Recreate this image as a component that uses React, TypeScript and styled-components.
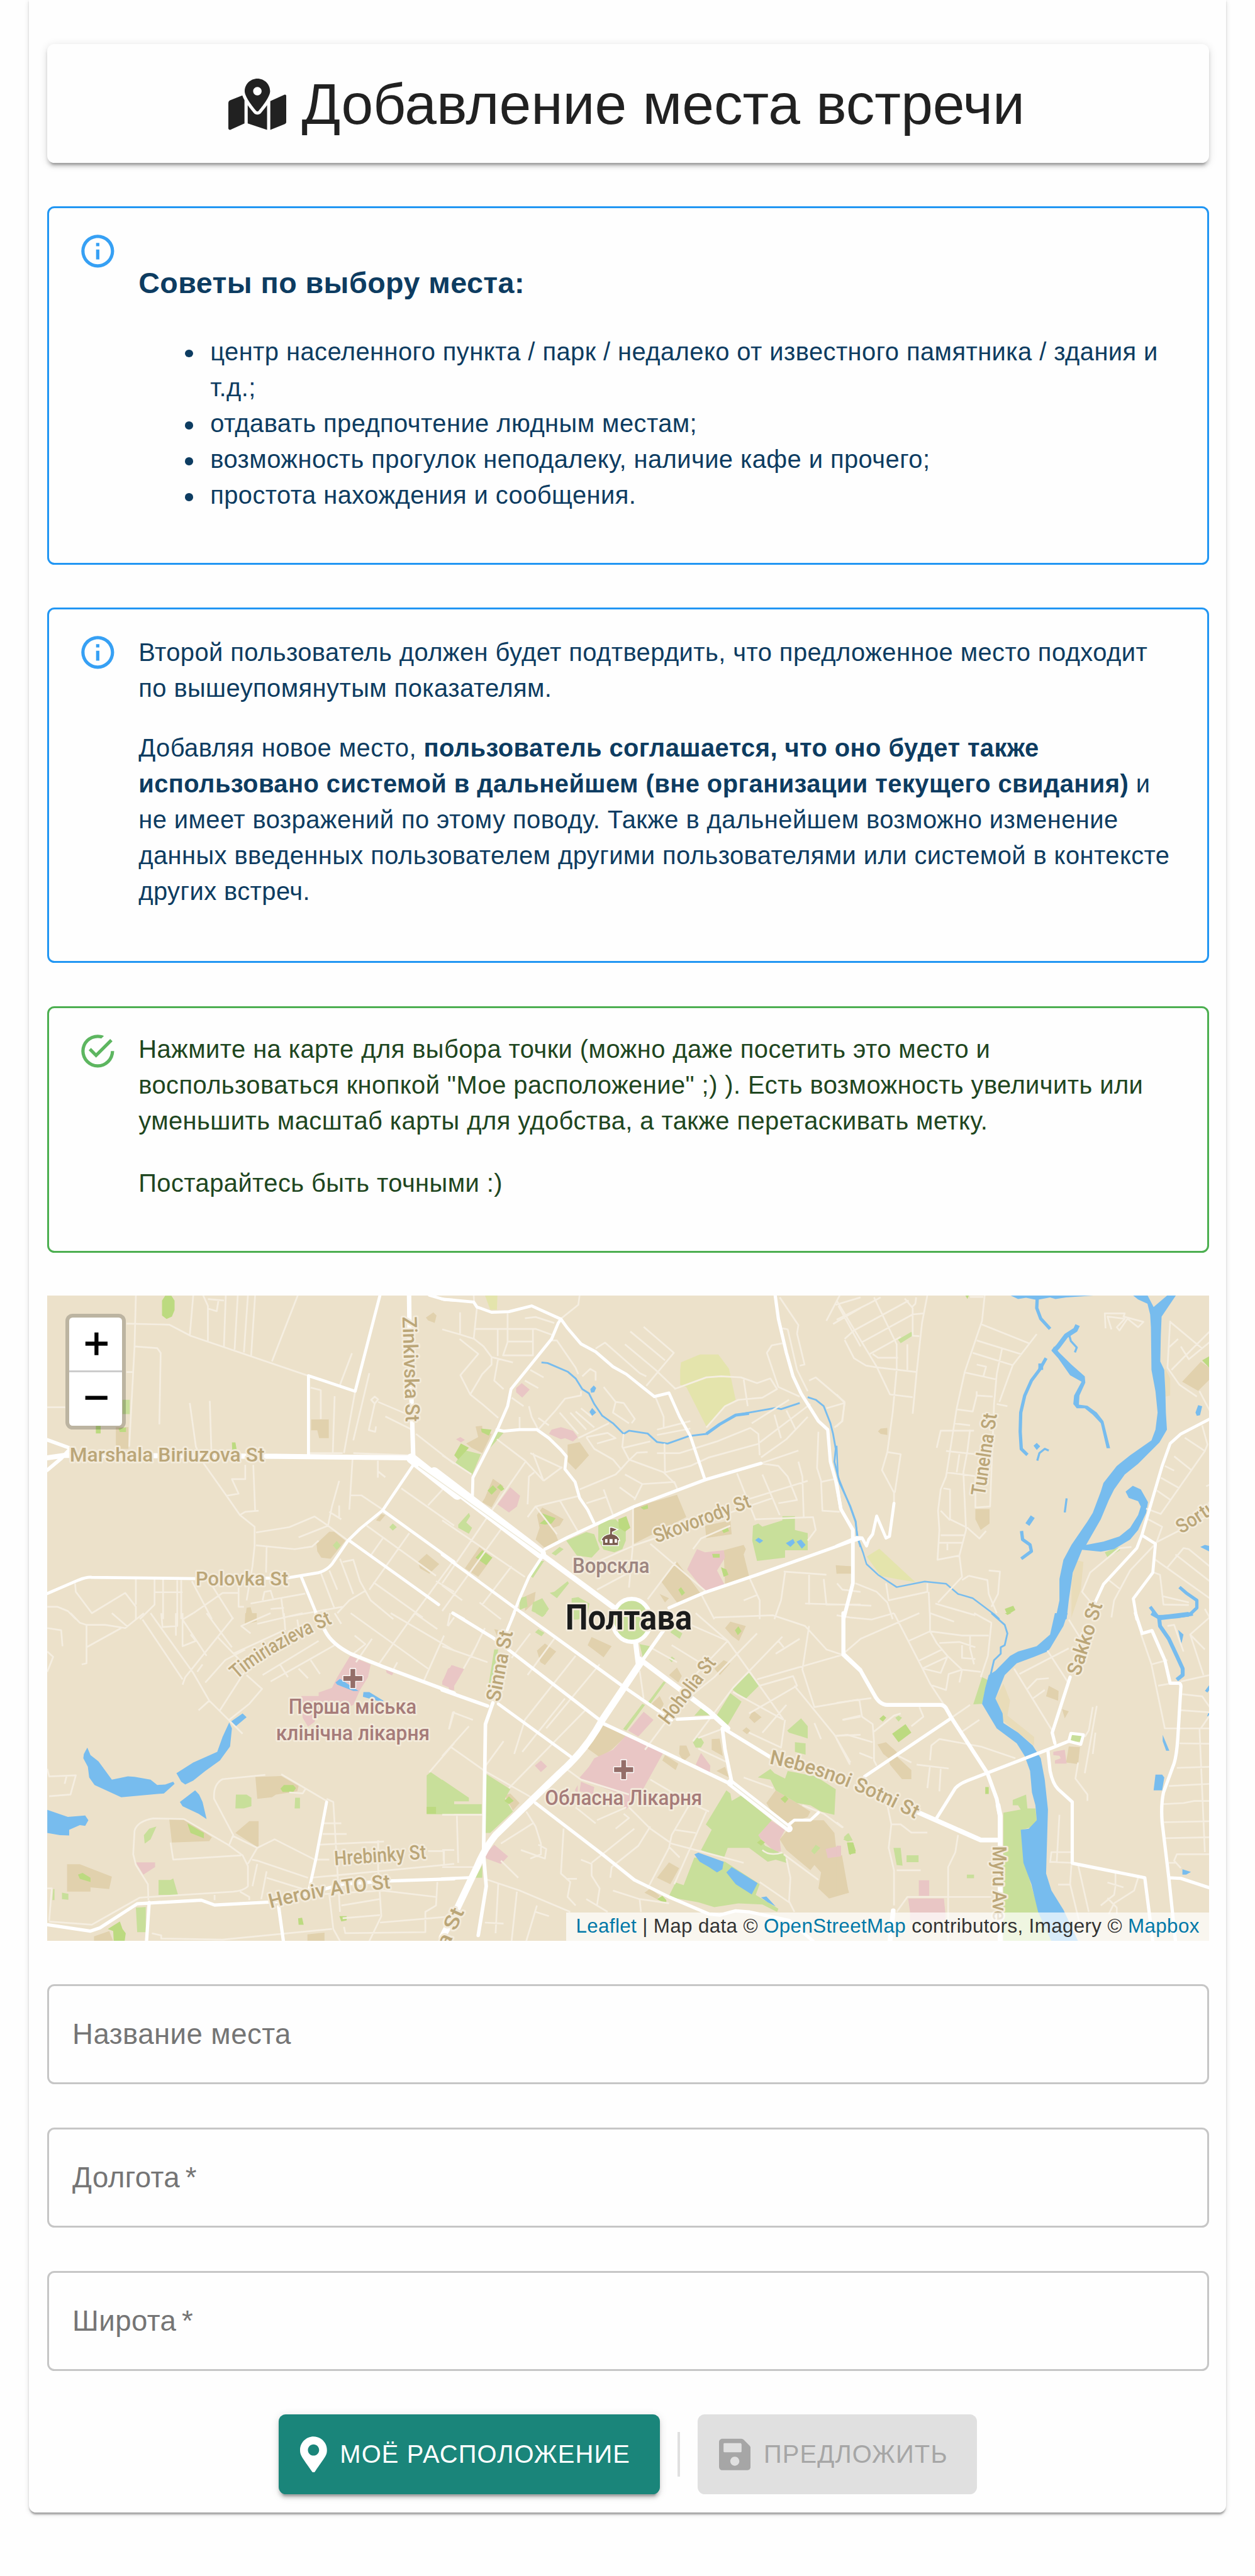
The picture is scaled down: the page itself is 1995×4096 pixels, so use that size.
import React from "react";
import styled, { createGlobalStyle, css } from "styled-components";
import { FaMapMarkedAlt, FaMapMarkerAlt, FaSave } from "react-icons/fa";

/* One design unit is 2.85 device pixels. */
const u = (n: number) => `${+(n * 2.85).toFixed(2)}px`;

const elevation1 = `0 ${u(2)} ${u(1)} ${u(-1)} rgba(0,0,0,.2), 0 ${u(1)} ${u(1)} 0 rgba(0,0,0,.14), 0 ${u(1)} ${u(3)} 0 rgba(0,0,0,.12)`;
const elevation2 = `0 ${u(3)} ${u(1)} ${u(-2)} rgba(0,0,0,.2), 0 ${u(2)} ${u(2)} 0 rgba(0,0,0,.14), 0 ${u(1)} ${u(5)} 0 rgba(0,0,0,.12)`;

const GlobalStyle = createGlobalStyle`
  *, *::before, *::after { box-sizing: border-box; }
  body {
    margin: 0;
    background: #fefefe;
    font-family: "Liberation Sans", Arial, sans-serif;
    color: rgba(0, 0, 0, 0.87);
  }
`;

const Page = styled.div`
  width: 1995px;
  height: 4096px;
  overflow: hidden;
  padding: 0 ${u(16)};
`;

const Sheet = styled.main`
  display: flex;
  flex-direction: column;
  gap: ${u(24)};
  height: ${u(1401.8)};
  padding: ${u(24.6)} ${u(9.67)} ${u(10)} ${u(10.33)};
  background: #fefefe;
  border-radius: 0 0 ${u(4)} ${u(4)};
  box-shadow: ${elevation1};
`;

const TitleCard = styled.header`
  display: flex;
  justify-content: center;
  align-items: center;
  gap: ${u(8.7)};
  height: ${u(66.35)};
  padding: ${u(1)} ${u(1.9)} 0 0;
  background: #fefefe;
  border-radius: ${u(4)};
  box-shadow: ${elevation2};
  svg {
    width: ${u(32.4)};
    height: ${u(28.6)};
  }
`;

const Title = styled.h1`
  margin: 0;
  font-size: ${u(32)};
  font-weight: 400;
  line-height: 1.2;
  white-space: nowrap;
`;

type Tone = "info" | "success";
const tones = {
  info: { line: "#2196f3", text: "rgb(13,60,97)" },
  success: { line: "#4caf50", text: "rgb(30,70,32)" },
};

const AlertBox = styled.section<{ $tone: Tone; $height: number }>`
  display: flex;
  height: ${(p) => u(p.$height)};
  padding: ${u(6)} ${u(16)};
  border: 3px solid ${(p) => tones[p.$tone].line};
  border-radius: ${u(4)};
  color: ${(p) => tones[p.$tone].text};
  font-size: ${u(14)};
  line-height: 1.43;
  letter-spacing: ${u(0.15)};
`;

const AlertIcon = styled.div<{ $tone: Tone }>`
  display: flex;
  padding: ${u(7)} 0;
  margin-right: ${u(11.9)};
  opacity: 0.9;
  svg {
    width: ${u(22)};
    height: ${u(22)};
    fill: ${(p) => tones[p.$tone].line};
  }
`;

const Message = styled.div<{ $top?: number }>`
  flex: 1;
  padding-top: ${(p) => u(p.$top ?? 8)};
`;

const TipsHeading = styled.h3`
  margin: ${u(16.38)} 0;
  font-size: ${u(16.38)};
`;

const Tips = styled.ul`
  margin: 0;
  padding-left: ${u(40)};
  list-style: none;
`;

const Tip = styled.li`
  position: relative;
  &::before {
    content: "";
    position: absolute;
    left: ${u(-14.2)};
    top: ${u(9)};
    width: ${u(4.5)};
    height: ${u(4.3)};
    border-radius: 50%;
    background: currentColor;
  }
`;

const Paragraph = styled.p<{ $gap: number }>`
  margin: ${(p) => u(p.$gap)} 0 0;
`;

const MapFrame = styled.div`
  position: relative;
  height: ${u(360)};
  overflow: hidden;
  background: #ece1ca;
`;

const MapCanvas = styled.svg`
  display: block;
  width: 100%;
  height: 100%;
`;

const ZoomControl = styled.div`
  position: absolute;
  left: ${u(10)};
  top: ${u(10.2)};
  width: ${u(34)};
  border: 6px solid rgba(0, 0, 0, 0.2);
  border-radius: ${u(4)};
  background: #fff;
  background-clip: padding-box;
`;

const ZoomButton = styled.button<{ $first?: boolean }>`
  display: flex;
  align-items: center;
  justify-content: center;
  width: 100%;
  height: ${(p) => u(p.$first ? 30.4 : 29.8)};
  padding: 0 0 ${(p) => u(p.$first ? 0.2 : 1.4)} ${u(1)};
  border: 0;
  ${(p) => p.$first && css`border-bottom: 3px solid #ccc;`}
  background: transparent;
  color: #000;
  font: 400 ${u(24.5)} / 1 "Liberation Sans", Arial, sans-serif;
  -webkit-text-stroke: ${u(0.45)} #000;
`;

const Attribution = styled.div`
  position: absolute;
  right: 0;
  bottom: 0;
  height: ${u(16)};
  padding: 0 ${u(5.3)} ${u(0.7)};
  display: flex;
  align-items: center;
  background: rgba(255, 255, 255, 0.7);
  color: #333;
  font-size: ${u(11)};
  letter-spacing: ${u(0.13)};
  line-height: 1;
  white-space: pre;
  a {
    color: #0078a8;
    text-decoration: none;
  }
`;

const Field = styled.label<{ $required?: boolean }>`
  display: flex;
  align-items: center;
  height: ${u(56)};
  padding: 0 ${u(13)};
  border: 3px solid #c6c6c6;
  border-radius: ${u(4)};
  color: #757575;
  font-size: ${u(16)};
  letter-spacing: ${u(0.15)};
  word-spacing: ${(p) => u(p.$required ? -1.6 : 0)};
  white-space: pre;
`;

const Actions = styled.div`
  display: flex;
  justify-content: center;
  align-items: center;
  gap: ${u(9.9)};
  padding-right: ${u(0.5)};
`;

const ActionButton = styled.button<{ $muted?: boolean; $width: number }>`
  display: flex;
  align-items: center;
  gap: ${u(7.3)};
  width: ${(p) => u(p.$width)};
  height: ${u(44.8)};
  padding: 0 0 0 ${u(12)};
  border: 0;
  border-radius: ${u(4)};
  background: ${(p) => (p.$muted ? "#e0e0e0" : "#1a857a")};
  color: ${(p) => (p.$muted ? "#a6a6a6" : "#fff")};
  box-shadow: ${(p) => (p.$muted ? "none" : elevation2)};
  font-family: inherit;
  font-size: ${u(14)};
  letter-spacing: ${u(0.4)};
  white-space: nowrap;
  svg {
    height: ${u(20.2)};
    width: ${(p) => u(p.$muted ? 17.6 : 15)};
    flex: none;
  }
`;

const Rule = styled.div`
  width: ${u(1.2)};
  height: ${u(24.9)};
  background: #e0e0e0;
`;

/* ---------- Map data ---------- */

interface Tile {
  x: number;
  y: number;
  tan: string;
  pink: string;
  green: string;
  park: string;
  meadow?: string;
  sand?: string;
  water: string;
  streams: [number, string][];
  lanes: string;
  roads: [number, string][];
}

const tiles: Tile[] = [
  {
    x: 60, y: 2150,
    tan: "M300 668H347V770H300ZM1032 632H1098V720H1062L1055 683H1032ZM1462 155L1490 130L1502 145L1495 180L1470 168ZM1052 1215L1100 1158L1118 1158L1160 1200L1105 1285L1070 1280L1055 1250ZM1275 1105L1295 1075L1310 1080L1290 1110ZM1432 1300L1465 1262L1512 1310L1475 1355L1440 1330ZM785 1568L790 1515L805 1512L817 1568Z",
    pink: "",
    green: "M325 540H352V607H325ZM1325 1137L1338 1120L1353 1137L1338 1153ZM1113 1222L1128 1202L1143 1222L1128 1244Z",
    park: "M473 75L485 52H508L520 75V120L510 150L490 161L473 145ZM225 662H243V698H225ZM310 675L338 670V691H315ZM735 740H748L753 774H736Z",
    water: "", streams: [],
    lanes: "M375 50L370 290L350 760M43 575H110M340 183L500 188L580 240L1020 427M590 50L577 240M627 50L645 100V268M712 50L705 290M757 50L745 305M795 50L780 318M822 50L807 333M645 68L705 75M685 70L678 125L645 112M982 50L885 360M370 290L455 298L468 320L463 655M340 410H362M577 555L600 760L630 840L715 990L765 1080L820 1135V1225L812 1320L790 1480M652 545L658 780M1185 322L1140 470M1030 483L1068 495V630M1120 523L1113 790M1197 500L1155 790M1250 415L1190 730M1270 525L1283 538L1270 558L1257 540ZM1283 550L1415 620M1270 560L1248 682L1272 690L1275 665M1310 618L1410 680M1425 700L1568 840M815 845L822 1060M785 845V912H735L760 980L715 990M765 1080L785 1065L835 1060M1187 820L1175 1055M1282 825V875L1310 903M1282 875V905M1137 920L1110 1040L1095 1130M1100 1065L1145 1100M1137 1035V1090M825 1162L950 1137L1045 1087L1095 1130L1170 1200M985 1185L1095 1130M825 1222L970 1240L1035 1228L1060 1200M865 1230L863 1350M1180 988H1220L1300 1055M1370 955L1568 1130M1525 960L1470 1035M1240 1130L1500 1365M1400 1165L1250 1430M1300 1190L1255 1270M1568 1290L1410 1560M1500 1390L1568 1440M1140 1285L1190 1450M1150 1300L1190 1290L1215 1390L1255 1480L1340 1568M1100 1340L1130 1430M1068 1350L1120 1520M1235 1435L1175 1480L1130 1540M1265 1395L1450 1560M375 1380V1500M445 1380V1500L390 1568M477 1380V1568M530 1385V1568M545 1385V1568M445 1442H550M147 1400L150 1440L210 1540L335 1445L375 1510V1568M43 1510H80L120 1530L150 1568M585 1390L660 1568M650 1390L740 1568M590 1540L700 1445H760M760 1420V1510H780M805 1495L1010 1448M880 1520L930 1515M920 1470L930 1568M850 1480L857 1440L880 1435L890 1475M1150 1510L950 1555M1020 790H1150M1190 790L1400 800",
    roads: [
      [5, "M1290 50L1197 500L1022 427V800"],
      [7.5, "M1399 50L1401 250L1415 820"],
      [8.5, "M43 812L110 800L900 805L1405 812"],
      [6, "M43 728L125 765M130 768L95 815L43 870"],
      [17, "M1408 815L1580 985"],
      [5, "M1415 845L1300 1058L1215 1145L1170 1200L1110 1310Q1090 1340 1060 1350L990 1365L940 1375L600 1378L210 1372Q190 1370 160 1385L43 1448M1300 1058L1568 1300M1175 1200L1510 1500M995 1370L1060 1568M1475 50L1530 70L1568 73"],
    ],
  },
  {
    x: 740, y: 2150,
    tan: "M90 745L135 715L125 665L150 662V690L185 700L150 790L110 765ZM470 750L515 738L550 800L525 835L500 868L470 830ZM718 1045L880 985L915 1090L718 1215ZM985 1130L1080 1105L1085 1170L990 1188ZM1055 1245L1130 1220L1138 1240L1130 1265L1150 1365L1060 1410ZM820 1390L880 1300L970 1450L880 1490ZM160 1000L190 910L230 945L185 1045L150 1020ZM355 1080L375 1045L455 1100L440 1130L415 1140L435 1200L385 1235L350 1195L365 1140ZM85 1330L140 1230L188 1280L135 1370ZM1475 1315L1530 1320V1350L1478 1355ZM312 1460L350 1440L345 1490L310 1530ZM815 1450L850 1470L835 1490Z",
    pink: "M277 485L298 462L328 492L300 530L277 505ZM400 700L410 680L445 668L490 685L508 715L490 735L460 720L445 725ZM52 725L68 715L85 728L70 740ZM207 1030L255 950L292 990L280 1040L250 1068ZM935 1290L955 1240L985 1255L1055 1245L1060 1280L1030 1340L1060 1410L990 1448L918 1335Z",
    green: "M80 775L145 795L112 892L50 835ZM180 765L205 690L230 695ZM60 1125L100 1070L105 1085L90 1115L112 1140L100 1168L60 1140ZM410 1260L440 1230L455 1240L425 1270ZM465 1200L540 1160L570 1170L590 1240L560 1280L505 1270ZM585 1130L610 1105L650 1100L688 1150V1200L675 1240L645 1255L605 1242L585 1200ZM1165 1130L1185 1120L1200 1135L1275 1105V1085H1322V1150L1370 1165V1245H1285V1280L1180 1295L1162 1200ZM330 1365L370 1295H382L340 1375ZM403 1445L420 1440L470 1390L475 1400L430 1470ZM290 1470L315 1460L320 1510L290 1525ZM340 1490L375 1470L400 1520L380 1555L335 1530ZM485 1470L510 1465L552 1495L540 1568H485Z",
    park: "M70 745L100 765L60 820L45 800ZM145 675L185 680L175 708L148 692ZM660 1100L690 1085L705 1140L685 1158L662 1140ZM170 965L190 940L205 960L185 985ZM205 950L218 935L233 958L222 968ZM370 1070L425 1095L410 1120L385 1125L365 1120L385 1100ZM125 1280L150 1245L188 1280L165 1315ZM743 1045L770 1032L772 1050L755 1055ZM1045 1145L1070 1138L1075 1155L1055 1165ZM1012 1262L1040 1262V1280H1015ZM1045 1325L1065 1335L1073 1360L1055 1370ZM885 1430L895 1418L910 1445L898 1458Z",
    meadow: "M160 50H207L205 118H180ZM895 365L965 328H1035L1075 395L1100 540L1060 575L990 665L915 480L892 470V400Z",
    water: "M555 490L568 473L577 485L570 505L558 507ZM552 597L562 578L577 600L562 615ZM1173 1198L1185 1186L1203 1200L1190 1213ZM1288 1212L1315 1192L1322 1210L1305 1230ZM1328 1205L1345 1195L1362 1220L1348 1238Z",
    streams: [
      [3, "M372 365L395 368L470 408L500 440L525 490L550 510L570 560L600 615L640 650L680 700L700 685L770 698L805 738L845 745L925 710L990 700L1040 655L1100 612L1150 600L1250 578L1270 584L1340 555M1370 528L1400 540L1430 570L1455 650L1465 700L1475 770L1470 830L1490 930L1530 1040L1550 1110L1555 1180L1568 1230"],
      [5, "M990 700L1040 655L1100 612L1150 604"],
    ],
    lanes: "M515 50L510 95L440 165M67 130V230M0 210L70 235L120 255L155 290L185 340L265 365M118 50L120 90M130 110L118 255M120 208H350L410 235M245 135V270L228 332H340V210M208 210V335M245 267H340M65 255L135 325L68 425L105 515L150 560L210 625M185 340V375L150 420L105 515M210 345L195 450L230 490M310 158L350 152L420 180M410 262L430 262L500 390L510 420M525 430L555 395L575 410V450M330 400L380 435M260 530L305 570M310 450L360 485M520 500V520L460 535L425 590L360 680M325 570L335 620L360 680M290 620V680M360 625L400 660M575 300L610 272L740 415L765 430M685 280L800 400L875 490M705 220L835 355M755 198L868 320L765 475M870 490L990 435L1045 430L1120 435L1180 462L1230 440L1255 490L1200 530L1110 540L1060 570L990 670M1130 445L1145 570M1265 60L1335 190L1330 230L1358 375L1340 380M1275 205L1295 210L1330 400L1370 500M1275 275L1235 285L1217 320L1260 480L1340 525M1375 450L1400 435L1508 550L1500 640L1470 670M1508 555L1440 580M1568 110L1465 185M1490 50L1440 170M1568 60L1475 95M1485 100L1568 290M800 530L830 620V670M805 680L930 640M805 705L930 675M605 480L650 550L640 600L700 650M650 550L680 555L722 630L710 650M440 600L510 700M480 600L540 680M500 595L570 670M520 580L560 620M510 720L625 650M540 715L620 695L650 720L580 745M540 715L570 770L640 820L670 865L650 890L515 960M680 765L780 735M680 700L675 760L700 820L830 880L870 930M770 785L730 788L695 830L670 865M805 790H890L1030 735L1155 672L1185 700L1190 800M833 745L835 880M835 880L930 850L1000 810L1190 745M1160 650L1300 540M1190 740L1380 560M1245 610L1270 720M1290 590L1325 680M1195 810L1290 725L1370 620M1195 838L1335 778M1195 838L1260 850L1295 900L1330 1010L1260 1025M1105 885L1175 1105M1200 890L1265 1080M1150 1005L1370 920M1335 830L1350 900L1355 1090M1410 690L1405 860L1420 920L1425 1060L1490 1065M1420 925L1475 910M685 890L750 935L870 925L885 970M750 935L720 1010M665 950L720 1000M605 960L640 1080M540 1025L615 995M515 990L350 1040L320 1090M440 1010L510 1160M350 1040L430 1170M330 790L450 860M340 790L380 920M320 1030L325 900L345 880M205 725L310 825L380 920M450 855L380 920M315 825L240 960L0 1400M0 800L110 890M0 1105L310 1370M230 1130L0 1530M260 1320L150 1500M140 1490L220 1568M0 1410L75 1480M715 1045V1215L700 1420M580 1300L720 1222L820 1180L1240 1000M780 1215L990 1440M875 1300L770 1475M700 1350L580 1430M1080 1130L970 1190L940 1240M1175 1100L1390 1090L1400 1150L1370 1200M1150 1370L1190 1480V1568M1285 1350L1270 1480L1245 1568M1280 1345L1440 1360M1375 1360V1500M1360 1495L1500 1500M1430 1380L1440 1500L1568 1500M1130 1480L1180 1455M970 1450L1020 1568M1480 1400L1500 1430L1568 1440",
    roads: [
      [5, "M0 68L118 82L130 105L185 130L250 127L335 100L445 162L470 205L520 278L575 315L640 385L690 420L795 525L850 508L890 620L930 710L985 915M445 162L435 180L410 255L258 490L245 570L205 685L115 905L113 1000M205 680L230 687L290 680H355L400 720L445 775L465 805L460 865L498 925L515 1000L545 1055L568 1115M375 1275L325 1370L290 1470L260 1568M0 1265L330 1568M40 1540L80 1568"],
      [5.5, "M1248 50L1260 160L1290 320L1315 430L1345 510L1410 640L1445 680L1455 830L1475 920L1495 1055L1540 1150V1400L1505 1568M385 1240L470 1185L720 1040L985 915L1195 838M850 1515L980 1445L1180 1360L1540 1200L1568 1190"],
      [17, "M-30 880L370 1262"],
      [9, "M370 1262L650 1520"],
    ],
  },
  {
    x: 1400, y: 2150,
    tan: "M155 688L165 675L190 672V705L165 700ZM520 1052H573V1120L540 1150L520 1100ZM1295 455L1365 362L1398 390V445L1355 498ZM0 1320L55 1320V1355H0Z",
    pink: "",
    green: "M230 258L280 222L287 238L240 275ZM1005 1255L1060 1230L1062 1245L1015 1278Z",
    park: "M1370 355L1398 335V392ZM630 1520L662 1505L670 1525L640 1548ZM482 50H496L490 68Z",
    meadow: "M113 1275L160 1238L295 1395L225 1380L165 1365Z",
    sand: "M1230 390L1250 440V520L1232 525ZM895 1290L925 1300L915 1430L880 1560V1400Z",
    water: "M650 50L680 68L710 62L750 72L800 60L820 68L860 60L980 50ZM815 290L835 320L880 375L930 430L932 460L910 520L908 563L940 568L975 600L1000 640L1025 767L1012 767L990 650L960 610L930 580L900 580L887 560L890 520L918 455L875 425L830 345L805 310ZM1110 50H1165L1188 105L1240 50H1272L1245 100L1218 150L1215 240L1213 360L1228 400L1232 500L1234 600L1238 680L1210 740L1130 840L1080 890L1040 960L1020 1010L990 1100L935 1220L1000 1205L1060 1180L1100 1140L1130 1080L1140 1040L1130 1015L1095 1000L1083 970L1110 943L1140 960L1167 1020L1160 1070L1130 1150L1100 1195L1040 1240L990 1252L920 1243L885 1350L870 1480L862 1568L818 1580L835 1480V1380L850 1290L880 1220L940 1110L960 1070L990 970L1000 930L1050 850L1100 800L1180 730L1195 680L1203 600L1195 500L1180 400L1178 200L1175 140L1165 90L1130 70ZM1345 600L1355 565L1370 570L1362 612L1350 615ZM738 755L750 742L763 758L750 775ZM1363 1230L1380 1220L1398 1225V1252Z",
    streams: [
      [5.5, "M752 60L750 110L765 160L800 208M785 345L760 400L730 450L705 520L690 600L688 690L692 770L715 798M693 1155L697 1195L725 1220L730 1250L692 1285M1285 1418L1310 1445L1350 1480V1515L1325 1545L1205 1560L1175 1510"],
      [8, "M903 190L895 212L860 240L830 290L812 315M765 370V400M735 1088L715 1125M1210 1562L1320 1545"],
      [3.5, "M870 230L878 265L900 295L893 318M752 825L760 790L780 770L795 778M862 1002L855 1068"],
      [2.6, "M0 755L5 900L50 1040L70 1110L80 1190L100 1260L112 1310L155 1360L225 1418L330 1392L410 1402L455 1450L510 1470L590 1545L610 1568"],
    ],
    lanes: "M0 75L150 385L200 515L285 528M140 60L225 280V400L210 600L190 785L170 870L215 975V1025M0 165L120 90L165 60M30 255L65 215L270 75M95 270L285 140L325 135M125 325L240 245M30 260L65 345L110 380L150 388L300 410M135 325L155 343H230M255 65L285 110V240L310 242M340 50L320 180L300 410L285 605M265 280V400M298 60L295 90L283 105M0 515L30 555L20 640L0 665M190 785L240 795L218 975M555 50L545 170L480 410L450 580L410 900L390 960L380 1060L385 1150L378 1290L460 1270L470 1370L380 1490M500 58H550M540 185L720 275M525 262L695 328M510 320L660 378M750 232L660 378L610 550M480 412L600 445M620 300L600 420L590 560M525 375L560 385L550 430M525 500V520L585 525M450 585L510 595L525 520M440 650L500 660M375 765L390 685L515 685M500 680L490 780L475 880L485 1150L460 1270M410 780L520 795M410 880L520 898M460 795L450 880M600 560L640 570M590 560L575 1040L520 1045V900M400 955L425 960V1100L490 1140L535 1190L560 1155M390 1060L425 1105M390 1175H480M380 1210H475M415 1215V1245M495 1365L565 1385L570 1450L600 1540M570 1340L612 1345L605 1450L580 1510M470 1385L495 1365M70 1400L150 1440L190 1490L210 1568M185 1400L195 1480L340 1440V1400M345 1440L350 1568M30 1500L130 1505M370 1495L520 1550M1008 205L1005 135H1080L1075 150L1150 175L1130 200L1090 160L1060 215L1050 200L1080 160L1015 150L1030 210M1250 170L1240 390L1285 470L1350 525M1250 175L1370 300M1398 220L1310 330L1255 400M1290 290L1320 350L1398 270M1245 295L1280 255M1360 500L1398 590M1370 660L1390 750L1380 780L1215 1075L1160 1050M1305 718L1380 780M1265 805L1330 870M1230 850L1265 872M1215 905L1285 955M1200 965L1250 1008M1160 1095L1220 1135L1200 1205M1195 1210L1398 1080M1105 1230L1060 1235L950 1350L920 1440L960 1500M1195 1215L1100 1340L1040 1480L1030 1560M1020 1385L1065 1430M1195 1290L1398 1470M1240 1325L1300 1235L1320 1240L1398 1320M1270 1265L1398 1390M1190 1350L1212 1360L1225 1500L1320 1502M1220 1460L1320 1490M1380 1520L1398 1560M1385 945L1398 938",
    roads: [
      [5, "M0 1225L75 1185L95 1187L112 1225L120 1195L135 1170L150 1085L185 1188L198 1180L215 1025M1398 630L1290 700L1250 745L1220 850L1145 1170L1125 1235L1000 1405L965 1500M1145 1175L1195 1215L1185 1350L1112 1472L1125 1568"],
      [5.5, "M0 930L15 1050L60 1150V1400L25 1568"],
    ],
  },
  {
    x: 60, y: 2700,
    tan: "M823 768L920 763L985 810L980 835L900 850L885 863L830 870ZM500 965L555 963L660 1050L650 1068L510 1075ZM748 1030L800 975H835V1100ZM117 1177H165L285 1235L275 1293L205 1285V1305H117ZM218 1537V1515L275 1490L290 1537ZM1018 1505L1082 1497V1537H1018ZM785 0H828V40L783 52Z",
    pink: "M1178 200L1255 240L1245 300L1215 360L1190 430L1150 450L1050 460L1045 510L1020 532L1000 490L995 388H1060V372L1110 350L1130 300ZM375 1168H447V1190L403 1225ZM1312 265L1340 280L1335 292L1315 280ZM1568 245L1545 260L1525 320L1545 330L1550 362L1568 360Z",
    green: "M1465 760L1480 745L1568 820V942H1465ZM750 850H790L808 865V905L780 915H748ZM972 865H990V915H970ZM405 1040L425 1010L452 1000L430 1060L408 1080ZM460 1250H505L515 1243L533 1320H460ZM98 1310L122 1315V1343L98 1340ZM65 1293H70V1345H62ZM375 1380L412 1377V1495H380Z",
    park: "M917 822L930 805H965L975 820L965 838H925ZM568 985L630 1030V1055L580 1030ZM158 1225L175 1217L205 1240V1260L165 1245ZM270 1480L315 1445L325 1480L337 1500L333 1537H292L290 1490ZM983 1430L998 1427L1004 1460H985ZM1138 1420H1165V1440L1145 1445ZM1465 908H1500V940H1465Z",
    water: "M193 630L205 665L235 695L285 780L345 765L370 767L430 780L455 805L485 803L515 790L520 800L480 845L430 850L320 863L220 805L200 770L195 720L178 680L180 660ZM43 922L120 955L185 948L197 970L185 997L165 993L125 1015V1042L90 1040L43 1030ZM527 750L590 700L680 650L700 580L725 512L735 540L728 625L690 690L635 740L590 785L560 803L545 790ZM731 508L775 470L790 488L750 530ZM540 885L597 830L612 850L625 885L640 965L610 940L550 905ZM1123 325L1140 308L1210 365H1190L1130 335ZM1228 370L1250 370L1303 410L1300 418L1226 392Z",
    streams: [],
    lanes: "M43 70L95 80L100 155M43 180L65 205L43 275M130 0L165 45L190 55H260L335 70L405 0M190 55V235L172 240M190 160L320 70M285 0L345 65M400 30L550 310M430 0L590 280L650 410L775 565M470 0L475 65L530 60V0M525 0V105M550 0V155L600 130L580 100M640 0L735 160M590 0L550 30L640 200M740 20L560 300L550 335M785 170L710 220L635 325M680 110L780 240M780 280L690 455M625 240L605 275M650 410L610 455M790 290L848 355L800 425L725 500M880 0L770 60L805 95M830 50L1000 0M930 0L935 80M980 30L985 70M740 190L930 80M1120 150L880 320M1060 130L850 290M915 240L945 300M985 260L1020 305M1030 220L1065 285M1180 0L1470 260M1330 0L1568 175M1420 0L1285 240M1420 0L1505 75M1530 105L1455 315M1260 120L1200 230M1195 105L1235 145L1190 190M1568 20L1545 60M1355 230L1340 265M1120 0L1145 50M43 730L50 765L150 760L130 850L50 858M115 765L108 800M1568 610L1475 745M1550 540L1568 460M860 758L700 778Q665 800 668 870L740 1040L725 1085M920 755L1090 880M1010 825L1000 845L950 840M555 965L440 962Q380 975 370 1020L365 1130L375 1180L420 1270L422 1345M555 965L720 1085L775 1135L795 1185V1280Q780 1300 740 1305L390 1333L210 1460L50 1445M505 1075L515 1155L770 1135M740 1045L830 1100L895 1060L1045 1155M830 1100L795 1175M810 1155L830 1160L1020 1240M830 1175L812 1280M865 1210L845 1340M865 1240L1020 1300M765 1305L800 1330V1345M1090 870L1115 885L1130 1200L1140 1400M1080 985H1145M1075 1035H1165M1065 1085L1305 1070M1050 1155H1100M1030 1240L1530 1180L1568 1175M1283 1065V1200L1295 1420L1250 1537M1470 1115H1530V1180M1030 1320L1300 1300L1500 1330M1100 1320L1115 1480L1140 1537M1145 1370L1290 1340M1150 1430L1290 1415M1290 1450L1568 1420M1155 1470L1160 1500L1460 1495V1400L1500 1370L1505 1260M435 1500L470 1510V1525L700 1530L1110 1480M43 1290H60L50 1440M670 1320V1345",
    roads: [
      [5.5, "M43 1460L205 1490L240 1475L380 1362L620 1345L670 1368L905 1352L1000 1320L1150 1270L1320 1255L1568 1245M425 1355L415 1537M910 1375L928 1537"],
      [5, "M1090 885L1050 1150L1025 1290"],
      [6, "M1050 0L1085 85Q1110 145 1180 190L1300 250L1568 375"],
    ],
  },
  {
    x: 740, y: 2700,
    tan: "M355 175L385 142L427 180L385 243L368 230ZM560 112L635 155L605 207L545 150ZM1060 70L1080 40L1138 60L1112 130L1085 105ZM850 290L880 255L898 295L885 325ZM785 425L815 388L830 425L820 460ZM600 515L690 575L635 640L590 675L540 630ZM1020 260L1055 220L1080 235L1040 290ZM1010 590L1040 588L1052 670L1010 640ZM890 620L915 620L930 665L905 695L888 660ZM825 690L835 665L885 705L875 735ZM1028 740L1060 720L1075 770ZM1150 490L1165 455L1197 488L1170 515ZM1125 550L1140 535L1155 550L1142 567ZM235 855L255 845L290 890L265 925ZM1215 890L1250 830L1330 890L1380 930L1370 955L1295 990L1240 940ZM1265 1060L1325 970H1430L1470 1030L1480 1140L1525 1310L1450 1337L1410 1290L1420 1215L1395 1180L1380 1205L1290 1110ZM805 1240L850 1168L888 1195L855 1270ZM758 1310L780 1290L815 1325L805 1340ZM195 75L215 80L205 105Z",
    pink: "M0 320L35 243L82 262L60 310L38 355L0 335ZM347 715L370 690L393 718L370 745ZM697 550L755 462L792 500L735 578ZM690 570L828 655L755 820L730 850L690 920L665 880L650 840L512 775L550 720L570 680L640 640L670 600ZM520 790L570 815L565 850L515 835ZM497 830L508 805V845ZM160 1130L195 1085L247 1140L220 1175L165 1150ZM950 710L970 655L1005 715L1003 748ZM1183 1045L1230 970L1285 1015L1265 1060L1270 1115L1250 1122ZM1437 1105L1495 1090V1140L1445 1148Z",
    green: "M740 145L778 155L752 210ZM0 780L100 865V882H15V895H148V940H0ZM160 750L255 825L235 870L265 930L180 1030H160ZM830 320L838 325L780 425L770 420ZM750 425L760 430L690 550L678 543ZM945 480L970 445L1005 478ZM1085 355L1150 280L1187 340L1135 405ZM1080 375L1122 415L1070 525L1028 480ZM940 606L950 585H970L981 606L970 630H950ZM1293 550L1345 493L1370 530V587L1300 560ZM1322 605L1362 610V663L1322 650ZM1183 770L1230 730L1245 750L1285 775L1295 740L1400 765L1475 825L1470 945L1420 930L1380 900L1330 890L1250 830L1230 780ZM1065 830L1080 845L1085 880L1120 855L1235 970L1185 1040L1210 1090L1265 1122L1285 1130L1290 1170L1250 1155L1220 1165L1150 1100L1070 1100L1055 1150L970 1110L1010 1015L988 990ZM945 1145L1060 1165L1190 1270L1175 1320L1260 1385L1255 1400L1200 1365L1110 1360L1020 1378L960 1355L848 1330L875 1262L905 1275ZM125 1240L150 1180V1240ZM870 70L900 95L890 120L855 90ZM850 216L861 203L872 214L860 230ZM348 90L360 75L383 92L372 108ZM195 170H210L180 360L172 350ZM1505 1050L1520 1032L1537 1065L1520 1070ZM1383 1115L1400 1085L1417 1100L1395 1130ZM350 0H390L375 18ZM485 0H510V30H490Z",
    park: "M805 1340L825 1325L840 1345V1362ZM1517 1075L1540 1075L1550 1125L1525 1130ZM233 880L250 858L268 880L250 895ZM1097 80L1110 62L1122 85L1108 103ZM1180 1075L1195 1060L1210 1075L1195 1090ZM1268 870L1285 855L1298 870L1285 890Z",
    water: "M945 1130L960 1122L1055 1165L1050 1200L1030 1215L1000 1190L965 1165ZM1065 1215L1085 1190L1182 1265L1160 1318L1100 1270ZM1195 1332L1215 1328L1250 1375L1220 1355Z",
    streams: [],
    lanes: "M30 0L20 60M160 70L110 200M0 155L170 230M130 150L80 260M330 95L260 210M500 200L310 500L270 660M420 120L320 290M590 240L390 540M30 625L160 740L330 860M230 600L160 720M460 400L300 650M540 450L250 820M0 670L100 530M25 545L40 465L115 500M740 270L755 400M830 0L1070 130L940 300M780 160L880 230M860 150L990 250M950 0L1070 130L1150 270L1280 500M1180 95L1020 300L880 440L760 640M1275 110L1090 350L940 600M1340 120L1250 190M1260 130L1280 160M1090 370L1280 500M1020 20L1240 10L1360 60L1440 170L1500 195M1180 310L1500 195M1190 340L1315 295L1330 340L1150 470M1375 60L1350 265L1395 440L1560 405M1290 430L1200 560M1320 340L1470 570L1530 700M1470 575L1568 570M1395 515L1420 590M1500 500L1568 480M1150 560L1270 630L1285 500M780 780L930 890L1000 930M700 910L780 1010L860 1080L950 1110L1130 1170M930 890L860 1040L850 1100L770 1290M780 1000L735 1090L635 1190L630 1240M870 1015L950 1030M850 1095L890 1145M720 1010L560 1170M580 970L690 910M500 910L575 985M680 940L700 960L650 1010M465 730L520 780L700 850M340 985L220 1080M315 930L350 1000L370 1080V1130L330 1150M295 1110L385 1150L390 1105L360 1085M455 1010L445 1220L480 1260L470 1330L500 1370M520 1155L560 1175V1230L590 1290L580 1370M470 1245H505M0 945H150M55 950L60 1170M0 1110H45M5 1115V1160M160 1245L290 1300L480 1400M210 1270L200 1500M280 1305L260 1537M355 1370L315 1537M350 1400L400 1420M160 1450L230 1455M640 1300L740 1340L850 1360M540 1340L620 1400M740 1340L745 1400M0 1190H130M220 1160L285 1240M990 930L870 1270M1130 770L1240 820M1290 1150L1305 1240L1300 1350L1320 1400M1190 1260L1300 1355M1280 1130L1410 1250M1350 900L1430 940L1500 1005M1200 1110Q1225 1140 1275 1122M1055 540L960 585M960 635L1070 700",
    roads: [
      [5.5, "M40 0L190 115L600 510M300 0L680 345L860 500M350 890L600 1130L720 1250L850 1330L1000 1410L1040 1415L1100 1395L1150 1400L1300 1440L1390 1537M880 497L1020 488M1505 0V190L1568 265"],
      [5, "M270 0L240 90M210 425L490 680M0 1245L100 1240M1300 990L1320 970H1380L1410 935"],
      [6, "M190 420L162 520L155 1130L165 1280L135 1510M0 360L170 435M600 515L830 650L1080 800M1050 540L1060 640L1085 790M1060 545L1230 675"],
      [11.5, "M745 230L600 500Q540 640 440 750L200 1040Q160 1100 130 1190L50 1400L0 1520"],
      [6, "M830 80L745 230"],
      [8.5, "M725 140L735 240M740 215L1000 460L1070 540"],
      [12, "M1080 795L1300 1010"],
    ],
  },
  {
    x: 1400, y: 2700,
    tan: "M153 615L185 605L225 650L228 675L280 735V778L245 778L200 710L195 680L175 660ZM795 340L832 365L830 410L785 390ZM845 450L870 460L855 493ZM870 625L912 628L905 707L860 700ZM0 1130L20 1135L45 1310L0 1325Z",
    pink: "M812 650L855 640L862 705H818V690L840 680L835 668L812 665ZM308 1252H347V1325H308ZM268 1337H402L408 1410V1440H275V1400ZM0 1090H15V1140H0Z",
    green: "M545 300L570 315L555 370L545 425L512 427ZM660 875L710 850L715 915H745L750 970L740 1000L693 1015L700 1150L735 1300L760 1400L805 1537H625V935L690 920L680 900H660ZM878 570H920V603H878ZM220 490L232 480L245 490L232 508ZM213 1100H240L247 1183L225 1180ZM262 1135H307V1167H262ZM488 1225H515V1242H488ZM25 1060L45 1030L60 1065L40 1070Z",
    park: "M208 565L258 520L280 560L232 605ZM160 495L175 478L186 490L173 508ZM557 815H570V847H557ZM40 1075H62L72 1115L50 1133ZM630 0H655L640 8Z",
    sand: "M625 330L650 410L640 480L740 580V620L620 500L595 400Z",
    water: "M818 0H866L850 60L800 165L790 180L740 205L675 235L630 290L595 400L622 470L625 515L680 560L735 620L765 680L780 780L792 920L785 1220L805 1300L850 1390L905 1537H805L755 1400L730 1270L700 1170L690 1015L720 1010L750 970L745 900L732 840L725 740L705 670L675 610L600 540L545 425L557 350L570 290L595 270L650 200L680 180L750 155L800 100ZM1280 78L1300 100L1292 145ZM1222 570L1247 645H1235L1222 600ZM1195 757H1220L1228 770L1220 830H1188ZM1296 1200L1328 1213L1310 1225H1296Z",
    streams: [
      [3, "M580 0L630 55L640 95L630 150L615 160V190L590 220L575 300"],
      [6.5, "M1180 0L1205 18L1275 15L1335 3M1208 15L1212 60L1245 120L1275 200L1297 260V290L1275 312"],
      [5, "M1402 340L1385 368M1400 465L1394 485"],
    ],
    lanes: "M0 10L50 20L90 25L130 30L215 0M215 0L320 255L350 330L405 435M25 190L90 120L310 0M270 130L350 85V0M350 0L440 40M350 85L470 105H570M350 85L375 140L415 200L470 265L540 275M515 0L580 45L567 200L540 300M385 140L460 135L520 160M470 150V210L520 215M500 105V165L515 240M305 225L395 170M320 260L415 205L390 280L325 260M350 335L410 360L420 285L470 265L460 325M500 430L430 490M0 420L130 398M85 405L95 485L135 520L140 600V690L150 715M25 500L90 485M0 575L40 570L135 605M0 590L50 710M140 555L215 480L240 470M310 440L325 485L280 530M470 555L535 500M350 690L355 620L385 590L540 625L670 680M85 655L135 680M225 665L280 700M300 710L420 728M350 715L340 820M390 730L385 835M665 260L810 555M790 175L870 330M685 285L870 165M715 355L750 310L795 305M735 400L780 360M870 30L920 130M1140 95L1180 240L1230 540L1398 540M1180 240L1240 220M1205 340L1250 330M975 435L930 750M960 440L945 550L930 580M970 560L960 660M905 700L895 775L940 850V880M1398 290L1290 320M1325 100L1375 290M1240 60L1265 55L1300 180M1398 20L1325 100L1380 170M1295 380L1370 390L1398 440M1290 455L1398 465M1360 540L1380 1120M1398 480L1365 540M1285 610L1398 612M1275 725L1398 720M1245 810L1398 800M1225 895L1300 890L1340 880H1398M1225 980L1398 975M1230 1055L1398 1050M1398 1130L1275 1130L1265 1160L1290 1195M1245 1170H1275M190 900L205 990L195 1100L215 1205L215 1370M205 990H240L280 1028H340M225 1205H315M455 1040L445 1120L418 1190V1537M225 1400L265 1330H580M0 980L25 1005M835 945L825 1165M800 1170L805 1120H880M800 1165L880 1170M880 1180L875 1270L910 1450M905 1180L945 1400M830 1272H875M1045 1220V1280M1015 1262L1075 1285M1130 1240L1115 1300L1040 1360L1020 1410M1015 1335L1050 1380V1410M990 1370L1040 1320L1045 1280",
    roads: [
      [6.5, "M25 0V195L90 270L140 380Q160 430 190 430H390Q405 432 412 450L430 490L565 750L600 870L612 950V1060"],
      [5.5, "M430 492L105 765M375 960L395 920L445 820Q460 800 490 785L800 635L870 600M875 300L808 560L818 610M792 645L800 740Q810 800 830 825L883 885V1172L1155 1240L1185 1537M1120 0L1145 95L1182 82L1230 220L1250 328H1285Q1292 335 1290 350L1280 560Q1275 680 1260 720L1225 840Q1215 900 1220 980L1245 1240L1270 1537M1245 1240L1290 1243L1398 1287"],
      [5, "M870 600L878 563L925 570L915 615Z"],
      [8, "M605 900L613 950V1537M290 925L540 1063H612M212 1395L200 1537"],
    ],
  },
];

interface StreetLabel {
  text: string;
  path: string;
  length: number;
}

const streets: StreetLabel[] = [
  { text: "Marshala Biriuzova St", path: "M116.7 2446.8H500", length: 326 },
  { text: "Polovka St", path: "M327.4 2654H520", length: 155 },
  { text: "Zinkivska St", path: "M673.5 2204L680.5 2420", length: 176 },
  { text: "Tunelna St", path: "M1647.8 2504.6L1671 2350", length: 139 },
  { text: "Sakko St", path: "M1807 2806L1850 2670", length: 126 },
  { text: "Skovorody St", path: "M1098.5 2583L1276 2515", length: 171 },
  { text: "Timiriazieva St", path: "M397 2811Q445 2766 572 2710", length: 186 },
  { text: "Sinna St", path: "M836 2849.3L862 2712", length: 120 },
  { text: "Hoholia St", path: "M1118.6 2888L1211 2768", length: 132 },
  { text: "Nebesnoi Sotni St", path: "M1287 2952Q1400 2973 1545 3052", length: 262 },
  { text: "Hrebinky St", path: "M560 3122L734 3109.5", length: 154 },
  { text: "Heroiv ATO St", path: "M453 3194Q540 3170 680 3158", length: 204 },
  { text: "ra St", path: "M744 3274L785 3182", length: 82 },
  { text: "Myru Ave", path: "M1661.500 3090V3260", length: 124 },
  { text: "Sortuvalna St", path: "M1977 2568L2140 2462", length: 180 },
];

const places = [
  { text: "Ворскла", x: 958, y: 2633, length: 129, size: 35, fill: "#9d8580", weight: 500 },
  { text: "Перша міська", x: 483, y: 2868.5, length: 214, size: 35, fill: "#a67b79", weight: 500 },
  { text: "клінічна лікарня", x: 462, y: 2912.5, length: 257, size: 35, fill: "#a67b79", weight: 500 },
  { text: "Обласна Лікарня", x: 912, y: 3021.5, length: 263, size: 35, fill: "#a67b79", weight: 500 },
  { text: "Полтава", x: 946, y: 2727, length: 212, size: 57.5, fill: "#1b1c1c", weight: 700 },
];

const place = (t: Tile) => `translate(${t.x} ${t.y}) scale(${1 / 2.24} ${1 / 2.8})`;

const fills: [keyof Tile, string][] = [
  ["sand", "#e9dcb9"],
  ["meadow", "#e4e4ac"],
  ["tan", "#e1d1ad"],
  ["pink", "#e9c6c5"],
  ["green", "#c8df9a"],
  ["park", "#bcda80"],
  ["water", "#77bcee"],
];

const Cross = ({ x, y }: { x: number; y: number }) => (
  <path
    d={`M${x - 4} ${y - 16}h8v12h12v8h-12v12h-8v-12h-12v-8h12z`}
    fill="#946e69"
    stroke="#fff"
    strokeWidth={3}
    strokeLinejoin="round"
    paintOrder="stroke"
  />
);

const CityMap = () => (
  <MapCanvas viewBox="79 2168.4 1944 1080" preserveAspectRatio="none">
    <rect x="79" y="2168" width="1945" height="1081" fill="#ece1ca" />
    {fills.map(([kind, fill]) => (
      <g key={kind} fill={fill}>
        {tiles.map((t, i) => (
          <path key={i} transform={place(t)} d={(t[kind] as string) || "M0 0"} />
        ))}
      </g>
    ))}
    <g fill="none" stroke="#77bcee" strokeLinejoin="round">
      {tiles.map((t, i) =>
        t.streams.map(([w, d], k) => (
          <path key={`${i}-${k}`} transform={place(t)} d={d} strokeWidth={w * 0.95} vectorEffect="non-scaling-stroke" />
        ))
      )}
    </g>
    <g fill="none" stroke="#f5eee1" strokeWidth={2.7} strokeLinejoin="round">
      {tiles.map((t, i) => (
        <path key={i} transform={place(t)} d={t.lanes} vectorEffect="non-scaling-stroke" />
      ))}
    </g>
    <g fill="none" stroke="#fff" strokeLinejoin="round" strokeLinecap="round">
      {tiles.map((t, i) =>
        t.roads.map(([w, d], k) => (
          <path key={`${i}-${k}`} transform={place(t)} d={d} strokeWidth={w * 0.95} vectorEffect="non-scaling-stroke" />
        ))
      )}
    </g>
    <path d="M700 2454L905 2600M1226 2987L1318 3058" stroke="#eee9d8" strokeWidth={1.6} fill="none" />
    <ellipse cx="1057" cy="2712" rx="32" ry="36" fill="#c8df9a" stroke="#fff" strokeWidth={7} />
    <Cross x={590.5} y={2809.3} />
    <Cross x={1043.6} y={2962} />
    <path
      d="M1021 2557h3l8 3-8 4v4q10 2 12 10h-2v8h-25v-8h-2q2-8 14-10z"
      fill="#7a5c4f"
      stroke="#fff"
      strokeWidth={3}
      paintOrder="stroke"
    />
    <path d="M1012.5 2576h4v6h-4zM1020 2576h5v7h-5zM1028.500 2576h4v6h-4z" fill="#fff" />
    <g
      fontFamily='Roboto, "Open Sans", sans-serif'
      stroke="#f3ebdb"
      strokeWidth={6}
      strokeLinejoin="round"
      paintOrder="stroke"
    >
      {streets.map((s, i) => (
        <React.Fragment key={s.text}>
          <path id={`street-${i}`} d={s.path} fill="none" stroke="none" />
          <text fontSize={33.5} fontWeight={500} fill="#bba678">
            <textPath href={`#street-${i}`} textLength={s.length} lengthAdjust="spacingAndGlyphs">
              {s.text}
            </textPath>
          </text>
        </React.Fragment>
      ))}
      {places.map((p) => (
        <text
          key={p.text}
          x={p.x}
          y={p.y}
          fontSize={p.size}
          fontWeight={p.weight}
          fill={p.fill}
          textLength={p.length}
          lengthAdjust="spacingAndGlyphs"
        >
          {p.text}
        </text>
      ))}
    </g>
  </MapCanvas>
);

const iconPaths = {
  info: "M11,9H13V7H11M12,20C7.59,20 4,16.41 4,12C4,7.59 7.59,4 12,4C16.41,4 20,7.59 20,12C20,16.41 16.41,20 12,20M12,2A10,10 0 0,0 2,12A10,10 0 0,0 12,22A10,10 0 0,0 22,12A10,10 0 0,0 12,2M11,17H13V11H11V17Z",
  success: "M20,12A8,8 0 0,1 12,20A8,8 0 0,1 4,12A8,8 0 0,1 12,4C12.76,4 13.5,4.11 14.2,4.31L15.77,2.74C14.61,2.26 13.34,2 12,2A10,10 0 0,0 2,12A10,10 0 0,0 12,22A10,10 0 0,0 22,12M7.91,10.08L6.5,11.5L11,16L21,6L19.59,4.58L11,13.17L7.91,10.08Z",
};

const Alert = ({ tone, height, top, children }: { tone: Tone; height: number; top?: number; children: React.ReactNode }) => (
  <AlertBox $tone={tone} $height={height}>
    <AlertIcon $tone={tone}>
      <svg viewBox="0 0 24 24">
        <path d={iconPaths[tone]} />
      </svg>
    </AlertIcon>
    <Message $top={top}>{children}</Message>
  </AlertBox>
);

export default function App() {
  return (
    <Page>
      <GlobalStyle />
      <Sheet>
        <TitleCard>
          <FaMapMarkedAlt preserveAspectRatio="none" />
          <Title>Добавление места встречи</Title>
        </TitleCard>

        <Alert tone="info" height={200}>
          <TipsHeading>Советы по выбору места:</TipsHeading>
          <Tips>
            <Tip>центр населенного пункта / парк / недалеко от известного памятника / здания и т.д.;</Tip>
            <Tip>отдавать предпочтение людным местам;</Tip>
            <Tip>возможность прогулок неподалеку, наличие кафе и прочего;</Tip>
            <Tip>простота нахождения и сообщения.</Tip>
          </Tips>
        </Alert>

        <Alert tone="info" height={198.4}>
          Второй пользователь должен будет подтвердить, что предложенное место подходит по вышеупомянутым показателям.
          <Paragraph $gap={13.3}>
            Добавляя новое место,{" "}
            <b>
              пользователь соглашается, что оно будет также использовано системой в дальнейшем (вне организации текущего
              свидания)
            </b>{" "}
            и не имеет возражений по этому поводу. Также в дальнейшем возможно изменение данных введенных пользователем
            другими пользователями или системой в контексте других встреч.
          </Paragraph>
        </Alert>

        <Alert tone="success" height={137.6} top={7.1}>
          Нажмите на карте для выбора точки (можно даже посетить это место и воспользоваться кнопкой "Мое расположение"
          ;) ). Есть возможность увеличить или уменьшить масштаб карты для удобства, а также перетаскивать метку.
          <Paragraph $gap={14.6}>Постарайтесь быть точными :)</Paragraph>
        </Alert>

        <MapFrame>
          <CityMap />
          <ZoomControl>
            <ZoomButton $first>+</ZoomButton>
            <ZoomButton>−</ZoomButton>
          </ZoomControl>
          <Attribution>
            <a>Leaflet</a> | Map data © <a>OpenStreetMap</a> contributors, Imagery © <a>Mapbox</a>
          </Attribution>
        </MapFrame>

        <Field>Название места</Field>
        <Field $required>Долгота *</Field>
        <Field $required>Широта *</Field>

        <Actions>
          <ActionButton $width={212.8}>
            <FaMapMarkerAlt />
            МОЁ РАСПОЛОЖЕНИЕ
          </ActionButton>
          <Rule />
          <ActionButton $muted $width={155.8}>
            <FaSave />
            ПРЕДЛОЖИТЬ
          </ActionButton>
        </Actions>
      </Sheet>
    </Page>
  );
}
